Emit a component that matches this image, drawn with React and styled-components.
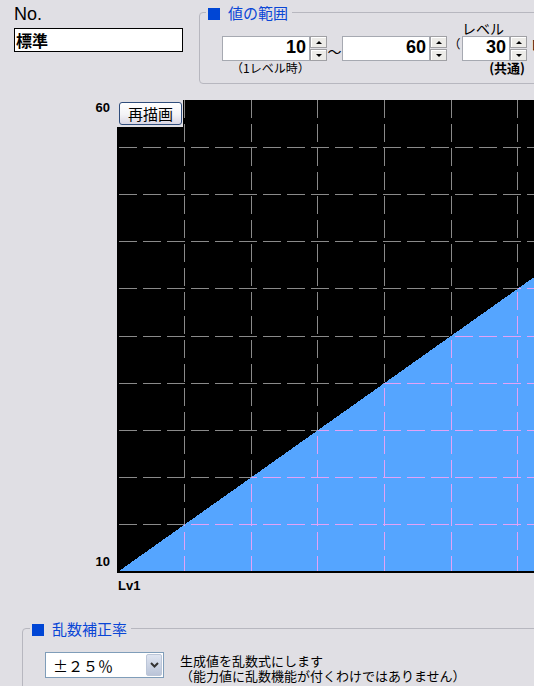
import React from 'react';
import styled, { createGlobalStyle } from 'styled-components';

const GlobalStyle = createGlobalStyle`
  html, body {
    margin: 0;
    padding: 0;
  }
  body {
    background: #e0dfe4;
    overflow: hidden;
    font-family: "Noto Sans CJK JP", "Noto Sans", sans-serif;
    color: #000;
  }
`;

const Screen = styled.div`
  width: 534px;
  height: 686px;
  overflow: hidden;
  background: #e0dfe4;
`;

const TopRow = styled.div`
  display: flex;
  align-items: flex-start;
  height: 100px;
`;

const NameColumn = styled.div`
  display: flex;
  flex-direction: column;
  margin-left: 14px;
  padding-top: 4px;
`;

const NoLabel = styled.div`
  font-family: "Liberation Sans", Arial, sans-serif;
  font-size: 18px;
  line-height: 20px;
`;

const NameInput = styled.input`
  box-sizing: border-box;
  width: 169px;
  height: 24px;
  margin: 4px 0 0;
  padding: 0 1px;
  border: 1px solid #000;
  border-radius: 0;
  background: #fff;
  font-family: "Noto Sans CJK JP", sans-serif;
  font-size: 16px;
  font-weight: bold;
  color: #000;
  outline: none;
`;

const GroupBox = styled.fieldset`
  box-sizing: border-box;
  flex: none;
  width: ${(p) => p.$width}px;
  min-width: 0;
  margin: ${(p) => p.$top}px 0 0 ${(p) => p.$left}px;
  padding: 0;
  border: 1px solid #b7b7bf;
  border-radius: 4px;
`;

const GroupTitle = styled.legend`
  margin-left: ${(p) => p.$indent}px;
  padding: 0 4px 0 2px;
  height: 17px;
  font-size: 15px;
  line-height: 17px;
  color: #0a46d6;
  white-space: nowrap;
`;

const TitleMark = styled.span`
  display: inline-block;
  width: 12px;
  height: 12px;
  margin-right: 8px;
  vertical-align: -1px;
  background: #0046d5;
`;

const RangeRow = styled.div`
  display: flex;
  align-items: flex-start;
  padding: 0 0 8px 22px;
`;

const SpinGroup = styled.div`
  display: flex;
  flex-direction: column;
`;

const FieldLabel = styled.div`
  height: 15px;
  font-size: 14px;
  line-height: 15px;
  white-space: nowrap;
`;

const FieldCaption = styled.div`
  height: 14px;
  padding: ${(p) => (p.$right ? '0 2px 0 0' : '0 0 0 9px')};
  text-align: ${(p) => (p.$right ? 'right' : 'left')};
  font-size: ${(p) => (p.$bold ? 13 : 12)}px;
  font-weight: ${(p) => (p.$bold ? 'bold' : 'normal')};
  line-height: 14px;
  white-space: nowrap;
`;

const SpinBox = styled.div`
  display: flex;
  height: 25px;
`;

const NumberInput = styled.input`
  box-sizing: border-box;
  width: ${(p) => p.$width}px;
  height: 25px;
  margin: 0;
  padding: 0 3px 2px 0;
  border: 1px solid #a6a9b1;
  border-radius: 0;
  background: #fff;
  text-align: right;
  font-family: "Liberation Sans Narrow", "Liberation Sans", Arial, sans-serif;
  font-size: 18px;
  font-weight: bold;
  color: #000;
  outline: none;
`;

const SpinButtons = styled.div`
  display: flex;
  flex-direction: column;
  gap: 1px;
`;

const SpinButton = styled.div`
  box-sizing: border-box;
  width: 17px;
  height: 12px;
  display: flex;
  align-items: center;
  justify-content: center;
  border: 1px solid #a0a0a4;
  background: #ecebe8;
  box-shadow: inset 1px 1px 0 #fff;

  &::after {
    content: '';
    width: 0;
    height: 0;
    border-left: 3px solid transparent;
    border-right: 3px solid transparent;
    ${(p) =>
      p.$down ? 'border-top: 3px solid #000;' : 'border-bottom: 3px solid #000;'}
  }
`;

const Joiner = styled.div`
  width: ${(p) => p.$width}px;
  height: 25px;
  margin-top: 15px;
  display: flex;
  align-items: ${(p) => (p.$top ? 'flex-start' : 'center')};
  justify-content: center;
  padding-top: ${(p) => (p.$top ? 1 : 4)}px;
  box-sizing: border-box;
  font-size: ${(p) => (p.$top ? 12 : 14)}px;
  line-height: 14px;
`;

const TrailingText = styled.div`
  margin: 15px 0 0 3px;
  font-size: 14px;
  line-height: 16px;
  white-space: nowrap;
`;

const ChartRow = styled.div`
  display: flex;
  width: 560px;
`;

const AxisScale = styled.div`
  box-sizing: border-box;
  flex: none;
  width: 117px;
  height: 473px;
  padding: 1px 7px 5px 0;
  display: flex;
  flex-direction: column;
  justify-content: space-between;
  align-items: flex-end;
`;

const AxisValue = styled.div`
  font-family: "Liberation Sans", Arial, sans-serif;
  font-size: 13px;
  font-weight: bold;
  line-height: 13px;
`;

const ChartFrame = styled.div`
  position: relative;
  flex: none;
  width: 430px;
  height: 473px;
  background: #000;
`;

const RedrawSlot = styled.div`
  position: absolute;
  left: 0;
  top: 0;
  padding: 1px 1px 2px 2px;
  background: #e0dfe4;
`;

const RedrawButton = styled.button`
  box-sizing: border-box;
  width: 63px;
  height: 23px;
  margin: 0;
  padding: 0;
  border: 1px solid #2f4d7c;
  border-radius: 3px;
  background: linear-gradient(#ffffff 0%, #f3f3f6 55%, #d9d6e3 100%);
  font-family: "Noto Sans CJK JP", sans-serif;
  font-size: 15px;
  line-height: 21px;
  color: #000;
`;

const LevelLabel = styled.div`
  margin: 6px 0 0 118px;
  font-family: "Liberation Sans", Arial, sans-serif;
  font-size: 13px;
  font-weight: bold;
  line-height: 13px;
`;

const RandomRow = styled.div`
  display: flex;
  align-items: flex-start;
  gap: 16px;
  padding: 15px 0 12px 22px;
`;

const ComboBox = styled.div`
  box-sizing: border-box;
  width: 119px;
  height: 26px;
  display: flex;
  align-items: stretch;
  padding: 1px;
  border: 1px solid #7f9db9;
  background: #fff;
`;

const ComboText = styled.div`
  flex: 1;
  padding-left: 6px;
  font-size: 15px;
  line-height: 23px;
  white-space: nowrap;
`;

const ComboArrow = styled.div`
  box-sizing: border-box;
  width: 16px;
  display: flex;
  align-items: center;
  justify-content: center;
  border: 1px solid #bcc6d8;
  border-radius: 2px;
  background: linear-gradient(#dfe5f1, #bac4d8);
`;

const NoteText = styled.div`
  margin-top: 1px;
  font-size: 13px;
  line-height: 15px;
  white-space: nowrap;
`;

// chart geometry (pixels inside the plot)
const CHART_W = 430;
const BASE_Y = 471;
const GRID_X = [67, 134, 200, 267, 334, 400];
const GRID_Y = [47, 94, 141, 188, 236, 283, 330, 377, 424];
const SLOPE = 0.708;
const curve = `2,${BASE_Y} ${CHART_W},${BASE_Y - SLOPE * (CHART_W - 2)} ${CHART_W},${BASE_Y}`;

const GridLines = ({ color }) => (
  <g stroke={color} strokeWidth="1" strokeDasharray="18 6" shapeRendering="crispEdges">
    {GRID_X.map((x) => (
      <line key={`x${x}`} x1={x + 0.5} y1={0} x2={x + 0.5} y2={BASE_Y} />
    ))}
    {GRID_Y.map((y) => (
      <line key={`y${y}`} x1={2} y1={y + 0.5} x2={CHART_W} y2={y + 0.5} />
    ))}
  </g>
);

const GrowthChart = () => (
  <svg width={CHART_W} height="473" viewBox={`0 0 ${CHART_W} 473`} style={{ display: 'block' }}>
    <defs>
      <clipPath id="areaClip">
        <polygon points={curve} />
      </clipPath>
    </defs>
    <rect width={CHART_W} height="473" fill="#000" />
    <GridLines color="#8a8a8a" />
    <polygon points={curve} fill="#55a5ff" shapeRendering="crispEdges" />
    <g clipPath="url(#areaClip)">
      <GridLines color="#e3a2f7" />
    </g>
  </svg>
);

const Spin = ({ value, width }) => (
  <SpinBox>
    <NumberInput $width={width} defaultValue={value} readOnly />
    <SpinButtons>
      <SpinButton />
      <SpinButton $down />
    </SpinButtons>
  </SpinBox>
);

const App = () => (
  <Screen>
    <GlobalStyle />
    <TopRow>
      <NameColumn>
        <NoLabel>No.</NoLabel>
        <NameInput defaultValue="標準" readOnly />
      </NameColumn>
      <GroupBox $width={420} $top={4} $left={16}>
        <GroupTitle $indent={6}>
          <TitleMark />
          値の範囲
        </GroupTitle>
        <RangeRow>
          <SpinGroup>
            <FieldLabel />
            <Spin value="10" width={88} />
            <FieldCaption>（1レベル時）</FieldCaption>
          </SpinGroup>
          <Joiner $width={15}>〜</Joiner>
          <SpinGroup>
            <FieldLabel />
            <Spin value="60" width={88} />
          </SpinGroup>
          <Joiner $width={15} $top>（</Joiner>
          <SpinGroup>
            <FieldLabel>レベル</FieldLabel>
            <Spin value="30" width={48} />
            <FieldCaption $right $bold>(共通)</FieldCaption>
          </SpinGroup>
          <TrailingText>レベル</TrailingText>
        </RangeRow>
      </GroupBox>
    </TopRow>

    <ChartRow>
      <AxisScale>
        <AxisValue>60</AxisValue>
        <AxisValue>10</AxisValue>
      </AxisScale>
      <ChartFrame>
        <GrowthChart />
        <RedrawSlot>
          <RedrawButton type="button">再描画</RedrawButton>
        </RedrawSlot>
      </ChartFrame>
    </ChartRow>
    <LevelLabel>Lv1</LevelLabel>

    <GroupBox $width={560} $top={28} $left={22}>
      <GroupTitle $indent={7}>
        <TitleMark />
        乱数補正率
      </GroupTitle>
      <RandomRow>
        <ComboBox>
          <ComboText>±２５％</ComboText>
          <ComboArrow>
            <svg width="9" height="6" viewBox="0 0 9 6">
              <polyline points="1,1 4.5,4.5 8,1" fill="none" stroke="#333" strokeWidth="2" />
            </svg>
          </ComboArrow>
        </ComboBox>
        <NoteText>
          生成値を乱数式にします
          <br />
          （能力値に乱数機能が付くわけではありません）
        </NoteText>
      </RandomRow>
    </GroupBox>
  </Screen>
);

export default App;
